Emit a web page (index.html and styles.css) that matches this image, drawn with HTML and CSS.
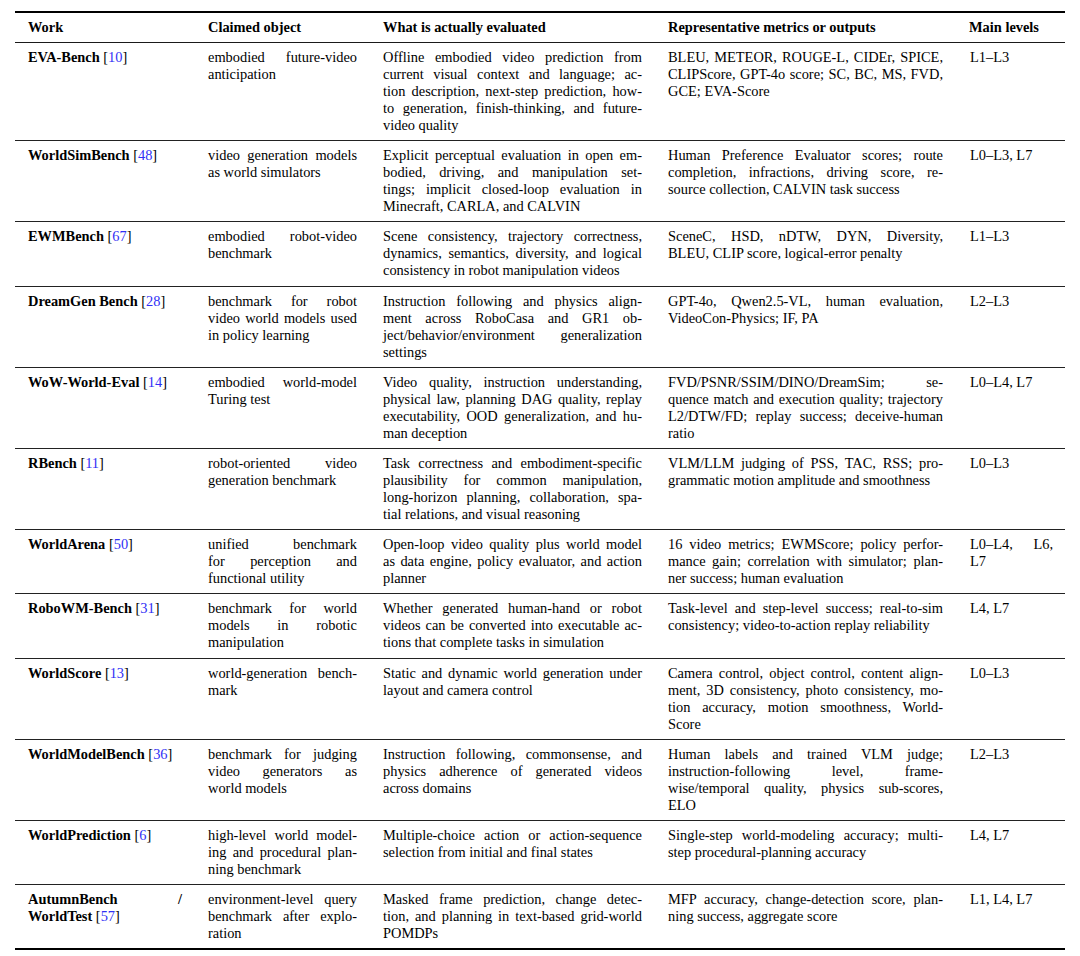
FILE: index.html
```html
<!DOCTYPE html>
<html lang="en">
<head>
<meta charset="utf-8">
<title>World model benchmarks</title>
<link rel="stylesheet" href="styles.css">
</head>
<body>
<table class="tbl">
  <thead>
    <tr>
      <th class="c1">Work</th>
      <th class="c2">Claimed object</th>
      <th class="c3">What is actually evaluated</th>
      <th class="c4">Representative metrics or outputs</th>
      <th class="c5">Main levels</th>
    </tr>
  </thead>
  <tbody>
    <tr>
      <td><span class="ln"><b>EVA-Bench</b> [<a class="cite">10</a>]</span></td>
      <td><span class="ln">embodied future-video</span><span class="ln">anticipation</span></td>
      <td><span class="ln">Offline embodied video prediction from</span><span class="ln">current visual context and language; ac-</span><span class="ln">tion description, next-step prediction, how-</span><span class="ln">to generation, finish-thinking, and future-</span><span class="ln">video quality</span></td>
      <td><span class="ln">BLEU, METEOR, ROUGE-L, CIDEr, SPICE,</span><span class="ln">CLIPScore, GPT-4o score; SC, BC, MS, FVD,</span><span class="ln">GCE; EVA-Score</span></td>
      <td><span class="ln">L1–L3</span></td>
    </tr>
    <tr>
      <td><span class="ln"><b>WorldSimBench</b> [<a class="cite">48</a>]</span></td>
      <td><span class="ln">video generation models</span><span class="ln">as world simulators</span></td>
      <td><span class="ln">Explicit perceptual evaluation in open em-</span><span class="ln">bodied, driving, and manipulation set-</span><span class="ln">tings; implicit closed-loop evaluation in</span><span class="ln">Minecraft, CARLA, and CALVIN</span></td>
      <td><span class="ln">Human Preference Evaluator scores; route</span><span class="ln">completion, infractions, driving score, re-</span><span class="ln">source collection, CALVIN task success</span></td>
      <td><span class="ln">L0–L3, L7</span></td>
    </tr>
    <tr>
      <td><span class="ln"><b>EWMBench</b> [<a class="cite">67</a>]</span></td>
      <td><span class="ln">embodied robot-video</span><span class="ln">benchmark</span></td>
      <td><span class="ln">Scene consistency, trajectory correctness,</span><span class="ln">dynamics, semantics, diversity, and logical</span><span class="ln">consistency in robot manipulation videos</span></td>
      <td><span class="ln">SceneC, HSD, nDTW, DYN, Diversity,</span><span class="ln">BLEU, CLIP score, logical-error penalty</span></td>
      <td><span class="ln">L1–L3</span></td>
    </tr>
    <tr>
      <td><span class="ln"><b>DreamGen Bench</b> [<a class="cite">28</a>]</span></td>
      <td><span class="ln">benchmark for robot</span><span class="ln">video world models used</span><span class="ln">in policy learning</span></td>
      <td><span class="ln">Instruction following and physics align-</span><span class="ln">ment across RoboCasa and GR1 ob-</span><span class="ln">ject/behavior/environment generalization</span><span class="ln">settings</span></td>
      <td><span class="ln">GPT-4o, Qwen2.5-VL, human evaluation,</span><span class="ln">VideoCon-Physics; IF, PA</span></td>
      <td><span class="ln">L2–L3</span></td>
    </tr>
    <tr>
      <td><span class="ln"><b>WoW-World-Eval</b> [<a class="cite">14</a>]</span></td>
      <td><span class="ln">embodied world-model</span><span class="ln">Turing test</span></td>
      <td><span class="ln">Video quality, instruction understanding,</span><span class="ln">physical law, planning DAG quality, replay</span><span class="ln">executability, OOD generalization, and hu-</span><span class="ln">man deception</span></td>
      <td><span class="ln">FVD/PSNR/SSIM/DINO/DreamSim; se-</span><span class="ln">quence match and execution quality; trajectory</span><span class="ln">L2/DTW/FD; replay success; deceive-human</span><span class="ln">ratio</span></td>
      <td><span class="ln">L0–L4, L7</span></td>
    </tr>
    <tr>
      <td><span class="ln"><b>RBench</b> [<a class="cite">11</a>]</span></td>
      <td><span class="ln">robot-oriented video</span><span class="ln">generation benchmark</span></td>
      <td><span class="ln">Task correctness and embodiment-specific</span><span class="ln">plausibility for common manipulation,</span><span class="ln">long-horizon planning, collaboration, spa-</span><span class="ln">tial relations, and visual reasoning</span></td>
      <td><span class="ln">VLM/LLM judging of PSS, TAC, RSS; pro-</span><span class="ln">grammatic motion amplitude and smoothness</span></td>
      <td><span class="ln">L0–L3</span></td>
    </tr>
    <tr>
      <td><span class="ln"><b>WorldArena</b> [<a class="cite">50</a>]</span></td>
      <td><span class="ln">unified benchmark</span><span class="ln">for perception and</span><span class="ln">functional utility</span></td>
      <td><span class="ln">Open-loop video quality plus world model</span><span class="ln">as data engine, policy evaluator, and action</span><span class="ln">planner</span></td>
      <td><span class="ln">16 video metrics; EWMScore; policy perfor-</span><span class="ln">mance gain; correlation with simulator; plan-</span><span class="ln">ner success; human evaluation</span></td>
      <td><span class="ln">L0–L4, L6,</span><span class="ln">L7</span></td>
    </tr>
    <tr>
      <td><span class="ln"><b>RoboWM-Bench</b> [<a class="cite">31</a>]</span></td>
      <td><span class="ln">benchmark for world</span><span class="ln">models in robotic</span><span class="ln">manipulation</span></td>
      <td><span class="ln">Whether generated human-hand or robot</span><span class="ln">videos can be converted into executable ac-</span><span class="ln">tions that complete tasks in simulation</span></td>
      <td><span class="ln">Task-level and step-level success; real-to-sim</span><span class="ln">consistency; video-to-action replay reliability</span></td>
      <td><span class="ln">L4, L7</span></td>
    </tr>
    <tr>
      <td><span class="ln"><b>WorldScore</b> [<a class="cite">13</a>]</span></td>
      <td><span class="ln">world-generation bench-</span><span class="ln">mark</span></td>
      <td><span class="ln">Static and dynamic world generation under</span><span class="ln">layout and camera control</span></td>
      <td><span class="ln">Camera control, object control, content align-</span><span class="ln">ment, 3D consistency, photo consistency, mo-</span><span class="ln">tion accuracy, motion smoothness, World-</span><span class="ln">Score</span></td>
      <td><span class="ln">L0–L3</span></td>
    </tr>
    <tr>
      <td><span class="ln"><b>WorldModelBench</b> [<a class="cite">36</a>]</span></td>
      <td><span class="ln">benchmark for judging</span><span class="ln">video generators as</span><span class="ln">world models</span></td>
      <td><span class="ln">Instruction following, commonsense, and</span><span class="ln">physics adherence of generated videos</span><span class="ln">across domains</span></td>
      <td><span class="ln">Human labels and trained VLM judge;</span><span class="ln">instruction-following level, frame-</span><span class="ln">wise/temporal quality, physics sub-scores,</span><span class="ln">ELO</span></td>
      <td><span class="ln">L2–L3</span></td>
    </tr>
    <tr>
      <td><span class="ln"><b>WorldPrediction</b> [<a class="cite">6</a>]</span></td>
      <td><span class="ln">high-level world model-</span><span class="ln">ing and procedural plan-</span><span class="ln">ning benchmark</span></td>
      <td><span class="ln">Multiple-choice action or action-sequence</span><span class="ln">selection from initial and final states</span></td>
      <td><span class="ln">Single-step world-modeling accuracy; multi-</span><span class="ln">step procedural-planning accuracy</span></td>
      <td><span class="ln">L4, L7</span></td>
    </tr>
    <tr>
      <td><span class="ln"><b>AutumnBench /</b></span><span class="ln"><b>WorldTest</b> [<a class="cite">57</a>]</span></td>
      <td><span class="ln">environment-level query</span><span class="ln">benchmark after explo-</span><span class="ln">ration</span></td>
      <td><span class="ln">Masked frame prediction, change detec-</span><span class="ln">tion, and planning in text-based grid-world</span><span class="ln">POMDPs</span></td>
      <td><span class="ln">MFP accuracy, change-detection score, plan-</span><span class="ln">ning success, aggregate score</span></td>
      <td><span class="ln">L1, L4, L7</span></td>
    </tr>
  </tbody>
</table>
</body>
</html>
```

FILE: styles.css
```css
html, body {
  margin: 0;
  padding: 0;
  background: #ffffff;
}

body {
  font-family: "Liberation Serif", "Times New Roman", serif;
  font-size: 14.4px;
  line-height: 17px;
  color: #000000;
}

.tbl {
  margin: 11px 0 0 15px;
  width: 1050px;
  table-layout: fixed;
  border-collapse: separate;
  border-spacing: 0;
  border-top: 2px solid #000000;
  border-bottom: 2px solid #000000;
}

.tbl th,
.tbl td {
  box-sizing: border-box;
  padding: 6px 13px 6px 13px;
  vertical-align: top;
  text-align: left;
}

.tbl td {
  padding-bottom: 6.2px;
}

.tbl th {
  font-weight: bold;
  border-bottom: 1px solid #1a1a1a;
  white-space: nowrap;
}

.tbl tbody tr td {
  border-bottom: 1px solid #222222;
}

.tbl tbody tr:last-child td {
  border-bottom: none;
}

.c1 { width: 180px; }
.c2 { width: 175px; }
.c3 { width: 285px; }
.c4 { width: 301px; }
.c5 { width: 109px; }

.tbl td:last-child {
  padding-left: 14px;
  padding-right: 12px;
}

.ln {
  display: block;
  text-align: justify;
  text-align-last: justify;
  word-spacing: -2px;
}

.ln:last-child {
  text-align-last: left;
  word-spacing: 0;
}

.cite {
  color: #2f2ff5;
  text-decoration: none;
}
```
